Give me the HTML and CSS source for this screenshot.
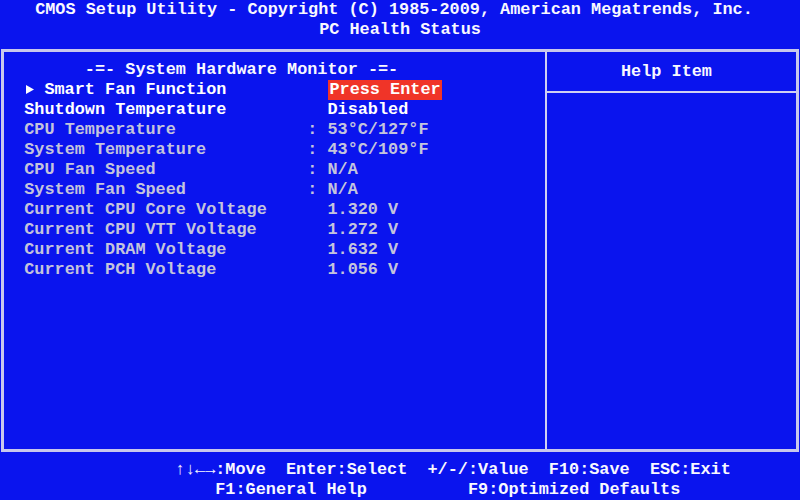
FILE: index.html
```html
<!DOCTYPE html>
<html lang="en">
<head>
  <meta charset="UTF-8">
  <meta name="viewport" content="width=device-width, initial-scale=1.0">
  <title>PC Health Status</title>
  <link rel="stylesheet" href="styles.css">
</head>
<body>

<header class="top">
  <div class="title">CMOS Setup Utility - Copyright (C) 1985-2009, American Megatrends, Inc.</div>
  <div class="subtitle">PC Health Status</div>
</header>

<main class="frame">
  <section class="settings">
    <div class="heading">-=- System Hardware Monitor -=-</div>

    <div class="row on">
      <span class="label"><span class="pointer"><svg width="8" height="9" viewBox="0 0 8 9"><polygon points="0,0 8,4.5 0,9" fill="#ffffff"/></svg></span>Smart Fan Function</span>
      <span class="sep"></span>
      <span class="value selected">Press Enter</span>
    </div>
    <div class="row on">
      <span class="label">Shutdown Temperature</span>
      <span class="sep"></span>
      <span class="value">Disabled</span>
    </div>

    <div class="row">
      <span class="label">CPU Temperature</span>
      <span class="sep">:</span>
      <span class="value">53°C/127°F</span>
    </div>
    <div class="row">
      <span class="label">System Temperature</span>
      <span class="sep">:</span>
      <span class="value">43°C/109°F</span>
    </div>
    <div class="row">
      <span class="label">CPU Fan Speed</span>
      <span class="sep">:</span>
      <span class="value">N/A</span>
    </div>
    <div class="row">
      <span class="label">System Fan Speed</span>
      <span class="sep">:</span>
      <span class="value">N/A</span>
    </div>
    <div class="row">
      <span class="label">Current CPU Core Voltage</span>
      <span class="sep"></span>
      <span class="value">1.320 V</span>
    </div>
    <div class="row">
      <span class="label">Current CPU VTT Voltage</span>
      <span class="sep"></span>
      <span class="value">1.272 V</span>
    </div>
    <div class="row">
      <span class="label">Current DRAM Voltage</span>
      <span class="sep"></span>
      <span class="value">1.632 V</span>
    </div>
    <div class="row">
      <span class="label">Current PCH Voltage</span>
      <span class="sep"></span>
      <span class="value">1.056 V</span>
    </div>
  </section>

  <aside class="help">
    <div class="help-title">Help Item</div>
    <div class="help-body"></div>
  </aside>
</main>

<footer class="keys">
  <div class="keyline first">
    <span>↑↓←→:Move</span>
    <span>Enter:Select</span>
    <span>+/-/:Value</span>
    <span>F10:Save</span>
    <span>ESC:Exit</span>
  </div>
  <div class="keyline second">
    <span>F1:General Help</span>
    <span>F9:Optimized Defaults</span>
  </div>
</footer>

</body>
</html>
```

FILE: styles.css
```css
body {
  margin: 0;
  width: 800px;
  height: 500px;
  overflow: hidden;
  background-color: #0a14ee;
  color: #f8f8ff;
  font-family: 'Liberation Mono', 'DejaVu Sans Mono', monospace;
  font-size: 16.85px; /* one cell is about 10.1px wide */
  font-weight: bold;
  line-height: 20px;
}

/* title rows */
.top {
  height: 40px;
}

.title {
  text-align: center;
  padding-right: 12px;
}

.subtitle {
  text-align: center;
}

/* outer box */
.frame {
  display: flex;
  box-sizing: border-box;
  height: 403px;
  margin: 9px 1px 0 1px;
  border: 3px solid #c8c8ec;
}

.settings {
  width: 541px;
  padding-top: 8px;
  border-right: 2px solid #d0d0f2;
}

.heading {
  padding-left: 8ch;
}

.row {
  display: flex;
  padding-left: 2ch;
  color: #c4c4dc;
}

.row.on {
  color: #ffffff;
}

.label {
  width: 28ch;
  white-space: pre;
}

.pointer {
  display: inline-block;
  width: 2ch;
  padding-left: 2px;
  box-sizing: border-box;
}

.sep {
  width: 2ch;
}

.value {
  white-space: pre;
}

.selected {
  background-color: #f03428;
  padding: 0 1px;
  margin-left: 1px;
}

/* help column */
.help {
  flex: 1;
  display: flex;
  flex-direction: column;
}

.help-title {
  padding: 10px 10px 9px 0;
  text-align: center;
  border-bottom: 2px solid #d0d0f2;
}

.help-body {
  flex: 1;
}

/* key hints */
.keys {
  margin-top: 8px;
}

.keyline {
  display: flex;
  white-space: pre;
}

.keyline.first {
  gap: 2ch;
  padding-left: calc(3px + 17ch);
}

.keyline.second {
  gap: 10ch;
  padding-left: calc(3px + 21ch);
}
```
